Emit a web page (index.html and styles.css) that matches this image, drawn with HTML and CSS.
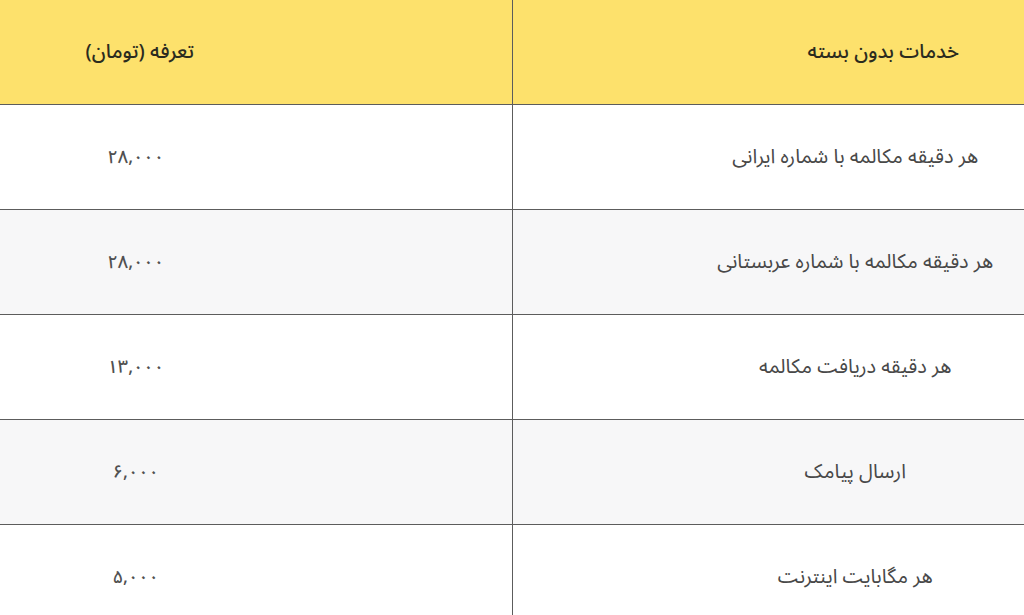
FILE: index.html
```html
<!DOCTYPE html>
<html lang="fa" dir="rtl">
<head>
<meta charset="utf-8">
<link rel="stylesheet" href="styles.css">
</head>
<body>
<table class="tariff">
  <thead>
    <tr>
      <th class="svc head-svc">خدمات بدون بسته</th>
      <th class="price">تعرفه (تومان)</th>
    </tr>
  </thead>
  <tbody>
    <tr class="odd">
      <td class="svc">هر دقیقه مکالمه با شماره ایرانی</td>
      <td class="price num">۲۸,۰۰۰</td>
    </tr>
    <tr class="even">
      <td class="svc">هر دقیقه مکالمه با شماره عربستانی</td>
      <td class="price num">۲۸,۰۰۰</td>
    </tr>
    <tr class="odd">
      <td class="svc">هر دقیقه دریافت مکالمه</td>
      <td class="price num">۱۳,۰۰۰</td>
    </tr>
    <tr class="even">
      <td class="svc">ارسال پیامک</td>
      <td class="price num">۶,۰۰۰</td>
    </tr>
    <tr class="odd">
      <td class="svc">هر مگابایت اینترنت</td>
      <td class="price num">۵,۰۰۰</td>
    </tr>
  </tbody>
</table>
</body>
</html>
```
FILE: styles.css
```css
html, body {
  margin: 0;
  padding: 0;
  background: #ffffff;
  overflow: hidden;
}
body {
  font-family: "Noto Sans Arabic", "DejaVu Sans", "Noto Sans", sans-serif;
  width: 1024px;
  height: 615px;
}
.tariff {
  width: 1024px;
  border-collapse: collapse;
  table-layout: fixed;
}
.tariff th,
.tariff td {
  height: 105px;
  padding: 0;
  text-align: center;
  vertical-align: middle;
  border-bottom: 1px solid #5c5c5c;
  box-shadow: 0 1px 0 #b8b8b8;
}
.tariff th {
  height: 104px;
  background: #fde16c;
  color: #2b2b1e;
  font-size: 20px;
  font-weight: 500;
}
.tariff td {
  color: #484848;
  font-size: 20px;
}
.tariff td.num {
  font-size: 18px;
  font-weight: 500;
  color: #505050;
  padding-right: 240px;
}
.tariff .svc {
  width: 512px;
  padding-left: 174px;
  border-left: 1px solid #5c5c5c;
  box-sizing: border-box;
}
.tariff .head-svc {
  padding-left: 230px;
}
.tariff .price {
  width: 512px;
  padding-right: 232px;
  box-sizing: border-box;
}
.tariff tr.even td {
  background: #f7f7f8;
}
.tariff tr.odd td {
  background: #ffffff;
}
```
